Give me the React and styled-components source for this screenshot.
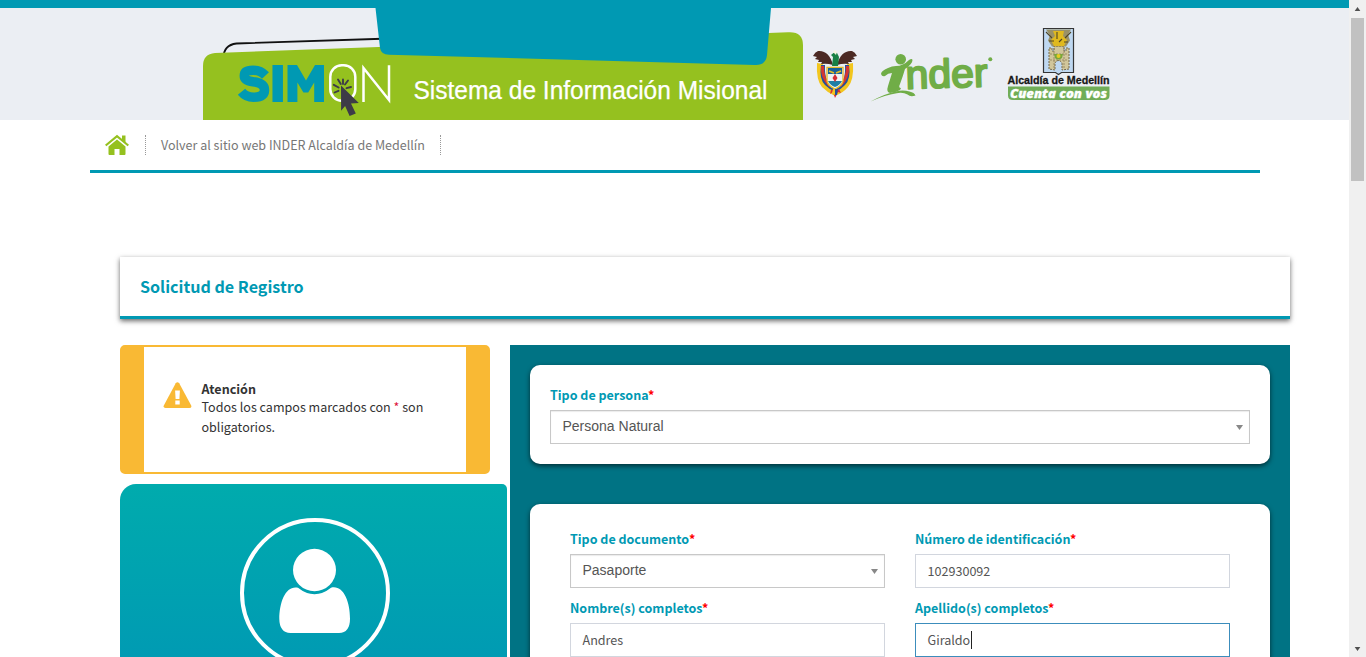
import React from "react";
import styled, { createGlobalStyle } from "styled-components";

const Global = createGlobalStyle`
  *, *::before, *::after { box-sizing: border-box; }
  body { margin: 0; overflow: hidden; background: #fff; color: #333; font: 12.5px/20px "Noto Sans CJK SC", sans-serif; }
  svg { display: block; flex: none; }
`;

const Window = styled.div`display: flex; width: 1366px; height: 657px; overflow: hidden;`;
const Page = styled.div`width: 1349px; height: 657px; overflow: hidden; flex: none;`;
const Header = styled.header`
  height: 120px; border-top: 8px solid #0099b3; background: #ebeef3;
  display: flex; padding-left: 203px;
`;
const Nav = styled.nav`
  width: 1170px; height: 53px; margin-left: 90px; padding: 0 0 0 14px;
  border-bottom: 3px solid #0099b3; display: flex; align-items: center;
`;
const NavLink = styled.a`
  height: 20px; line-height: 20px; margin-left: 16px; padding: 0 15px; color: #777;
  border-left: 1px dotted #999; border-right: 1px dotted #999; white-space: nowrap; font-size: 12.53px;
`;
const Content = styled.main`width: 1170px; margin: 84px 0 0 120px;`;
const TitleCard = styled.h1`
  margin: 0 0 26px; height: 62px; padding: 0 20px; border-bottom: 3px solid #0099b3;
  box-shadow: 0 2px 5px rgba(0,0,0,.6); color: #0099b3; font-size: 16.1px; line-height: 59px; font-weight: 700;
`;
const Columns = styled.div`display: flex; gap: 20px;`;
const Side = styled.aside`width: 370px; flex: none;`;
const Alert = styled.section`
  height: 129px; border: solid #f9b934; border-width: 2px 24px; border-radius: 5px;
  padding: 32px 18px 32px 19px; display: flex; gap: 9.5px; margin-bottom: 10px;
  svg { margin-top: 3px; }
`;
const AlertText = styled.p`margin: 0; line-height: 20px; font-size: 12.56px;`;
const AlertTitle = styled.strong`display: block; height: 18px; line-height: 19px; font-size: 12.55px;`;
const Star = styled.span`color: ${(p) => p.$tone || "#f00"};`;
const Profile = styled.section`
  width: 387px; height: 200px; padding-top: 34px; border-radius: 16px 5px 0 0;
  background: linear-gradient(#00abad, #009bb3 173px);
  svg { margin-left: 120px; }
`;
const FormPanel = styled.section`width: 780px; height: 400px; padding: 20px; background: #007384;`;
const Card = styled.div`
  border-radius: 10px; background: #fff; box-shadow: 0 2px 5px rgba(0,0,0,.6);
  padding: ${(p) => p.$pad}; height: ${(p) => p.$h}px; margin-bottom: 40px;
`;
const Grid = styled.div`display: grid; grid-template-columns: 315px 315px; gap: 0 30px;`;
const Field = styled.div`height: 69px;`;
const Label = styled.label`
  display: block; height: 25px; line-height: 19px; color: #0099b3; font-weight: 700; font-size: 12.5px;
`;
const Input = styled.div`
  height: 34px; border: 1px solid ${(p) => (p.$focus ? "#3c8dbc" : "#d2d6de")};
  padding: 0 11.5px; display: flex; align-items: center; color: #555; font-size: 12.58px;
`;
const Caret = styled.span`width: 1px; height: 18px; margin-left: 0.5px; background: #222;`;
const Select = styled.div`
  height: 34px; border: 1px solid #c8c8c8; box-shadow: inset 0 1px 1px rgba(0,0,0,.08);
  padding: 0 6px 2px 11.5px; display: flex; align-items: center; justify-content: space-between;
  color: #555; font: 14px/20px "Liberation Sans", sans-serif;
  svg { margin-top: 2px; }
`;
const Scrollbar = styled.div`
  width: 17px; height: 657px; background: #f0f0f0; display: flex; flex-direction: column;
  align-items: center; padding: 7px 0 6px;
`;
const Thumb = styled.div`width: 13px; height: 163px; margin: 7px 0 auto; background: #c1c1c1;`;

const Banner = () => (
  <svg width="600" height="112" viewBox="203 8 600 112">
    <path d="M223.500 62v-4q0-13 13-14.500L390 38.500" fill="none" stroke="#111" strokeWidth="1.800" />
    <path d="M203 120V66q0-12 12-13L788 32.300q15-1 15 13V120z" fill="#95c11f" />
    <path d="M375.500 8L380 48Q381 54.500 389 54.700L755 65q11 .5 12-10L771 8z" fill="#0099b3" />
    <g fill="none" stroke="#0099b3" strokeWidth="9.500">
      <path d="M265.500 75.500q-5-5.300-12.500-5.300-8.700 0-8.700 5.500 0 5 8.700 6 11.500 1.300 11.500 8.300 0 7.200-11 7.200-7.500 0-12-5.500" />
      <path d="M277.700 65v37" strokeWidth="10.500" />
    </g>
    <path d="M287.500 102V65h9.500l9 15.500L315 65h9v37h-9.800V82.500l-6 10h-4.800l-6-10V102z" fill="#0099b3" />
    <g fill="none" stroke="#fff" strokeWidth="2.500">
      <rect x="330.300" y="65.300" width="25" height="35.500" rx="11.500" />
      <path d="M363.500 102V68l25.500 32V65.300" />
    </g>
    <path d="M341 85.500l17.800 17.500-7.800.4 4.800 10-6.200 2.600-4.500-10-4 4.800z" fill="#3d3b47" />
    <path d="M333.800 84.800l4.800 2.700M334.500 92.500l4-1.700M338 79.500l2.800 4.500M343 79.500V84M348 80.500l-3 4M351 87l-4.500 1.200" stroke="#3d3b47" strokeWidth="1.900" strokeLinecap="round" />
    <text x="413.500" y="99" fill="#fff" stroke="#fff" strokeWidth=".25" fontFamily="Liberation Sans, sans-serif" fontSize="25" textLength="354" lengthAdjust="spacingAndGlyphs">Sistema de Información Misional</text>
  </svg>
);

const Logos = () => (
  <svg width="320" height="112" viewBox="803 8 320 112">
    <g>
      <path d="M817 63q-1 17 5 24 6 6 13 9 8-3 13-9 6-7 5-24l-6 1q4 16-4 21-4 4-8 5-4-1-8-5-8-5-4-21z" fill="#f2c61e" />
      <path d="M821 65q-2 14 4 20 4 4 9 6v-3q-10-5-9-23zM849 65q2 14-4 20-4 4-8 6v-3q9-5 8-23z" fill="#24509b" />
      <path d="M824 66q0 12 6 18l-1 3q-9-9-8-21zM846 66q0 12-6 18l1 3q9-9 8-21z" fill="#d63730" />
      <path d="M833 65Q829 50 818 51q-3 1-5 5l4 1-2 2 4 1-1 2 4 0-1 2q6-1 12 1zM837 65Q841 50 852 51q3 1 5 5l-4 1 2 2-4 1 1 2-4 0 1 2q-6-1-12 1z" fill="#4b2923" />
      <path d="M831 55q4-4 6-2l2 4-1 9h-6l1-9z" fill="#188044" />
      <path d="M833 52l2-2 2 2-1 3z" fill="#f7f3df" />
      <path d="M827 67.500h16V81q-1 5-8 8-7-3-8-8z" fill="#eef4f7" stroke="#e3b927" strokeWidth="1.300" />
      <path d="M828 68h14v6h-14z" fill="#18619a" /><path d="M828 81h14q-2 4-7 6-5-2-7-6z" fill="#207fa5" />
      <path d="M829 71l5 2M841 71l-5 2" stroke="#e5bd2b" strokeWidth="1.700" />
      <path d="M835 74l2.500 4-2.500 4-2.500-4z" fill="#d72e35" />
      <path d="M831 90l-1 4 3-2 2 6 3-6 3 1-2-4z" fill="#d72e35" /><path d="M833 89h2v6l-3-2z" fill="#f2c61e" /><path d="M835 89h3l-1 6h-2z" fill="#24509b" />
    </g>
    <g fill="#70ad47">
      <circle cx="900.700" cy="59.300" r="5.300" />
      <path d="M881 74q0-3 7-6 4-2 8-2 7 0 13-6 3-2 3.500 0 0 4-7.500 9-2 7-5 15-2 4 1 4l-1 2q-5 3-10 3-4-1-2-7l4-13q-4 0-7 3-3 1-4-2z" />
      <path d="M870.500 101.500q15-8 25-10 7-2 14 0 5 1 6 4-5 2-8-1-5-3-12-1-9 1-25 8z" />
      <circle cx="990.300" cy="59.300" r="2" />
      <text x="906" y="87.500" fontFamily="Liberation Sans, sans-serif" fontSize="40" stroke="#70ad47" strokeWidth="2" strokeLinejoin="round" textLength="82" lengthAdjust="spacingAndGlyphs" transform="rotate(-1.800 948 87)">nder</text>
    </g>
    <g>
      <path d="M1043.500 28.500h30V72.500h-12l-3 2-3-2h-12z" fill="#bfd8f1" stroke="#353535" strokeWidth="1.200" />
      <path d="M1049 69V48h3v3h2v-5h10v5h2v-3h3v21l-7 1v-7q-4-5-7 0v7z" fill="#d1c69b" stroke="#75694a" strokeWidth="1" strokeDasharray="2 1" />
      <path d="M1050 54h18M1050 60h18M1054 48v20M1064 48v20" stroke="#8f825b" strokeWidth=".8" strokeDasharray="2 1" />
      <path d="M1046 29.500h25l-3 5 2 6-4 6h-14l-4-6 2-5z" fill="#8d7939" opacity=".75" />
      <path d="M1053 31h11l-1 5 4 4-3 6h-10l-3-6 4-4z" fill="#e0b91f" />
      <path d="M1046 32l6 6M1049 41h5M1071 32l-6 6M1064 42h4M1057 32v7M1062 39l-3 3" stroke="#514624" strokeWidth="1.100" />
      <path d="M1054 54h9l-1 4q-4 3-7 0z" fill="#79a63c" /><circle cx="1058.500" cy="56" r="2" fill="#e5cb24" />
      <text x="1007.500" y="84" fill="#171717" stroke="#171717" strokeWidth=".3" fontFamily="Liberation Sans, sans-serif" fontSize="11.500" fontWeight="700" textLength="102" lengthAdjust="spacingAndGlyphs">Alcaldía de Medellín</text>
      <path d="M1008 86.500h101.500V95.500q0 4.500-5 4.500H1013q-5 0-5-4.500z" fill="#70ad57" />
      <text x="1010" y="98" fill="#fff" stroke="#fff" strokeWidth=".3" fontFamily="Open Sans, sans-serif" fontStyle="italic" fontSize="12.500" fontWeight="800" textLength="97" lengthAdjust="spacingAndGlyphs">Cuenta con vos</text>
    </g>
  </svg>
);

const Home = () => (
  <svg width="25" height="22" viewBox="0 0 25 22">
    <path d="M13 5.500L21.500 12.500V20q0 1-1 1h-5v-6h-5v6h-5q-1 0-1-1v-7.500z" fill="#95c11f" />
    <path d="M1.700 11.500L13 2.200 24.300 11.500" fill="none" stroke="#95c11f" strokeWidth="2.200" />
    <path d="M18 1.500h3.500v7.500l-3.500-3z" fill="#95c11f" />
  </svg>
);

const Warning = () => (
  <svg width="29" height="27" viewBox="0 0 29 27">
    <path d="M12.700 1.200q1.700-2 3.500 0l12 22.300q.8 2.500-2 2.500H2.500q-2.500 0-1.700-2.500z" fill="#f9b934" />
    <path d="M12.100 8.500h4.800l-.5 8.500h-3.800zM12.300 18.500h4.400v4h-4.400z" fill="#fff" />
  </svg>
);

const Avatar = () => (
  <svg width="150" height="150" viewBox="0 0 150 150">
    <circle cx="75" cy="75" r="73" fill="none" stroke="#fff" strokeWidth="4" />
    <ellipse cx="74.500" cy="52" rx="21.500" ry="21.200" fill="#fff" />
    <path d="M58 69.700q16.500 13 33 0c12-3 19 13 19 31q0 14-11 14.300H50.500Q39.500 114.700 39.300 101c0-18 7-34 18.700-31.300z" fill="#fff" />
  </svg>
);

const Arrow = ({ w = 7, h = 5, up, color = "#888" }) => (
  <svg width={w} height={h} viewBox="0 0 7 5"><path d={up ? "M0 5L3.500 0 7 5z" : "M0 0h7L3.500 5z"} fill={color} /></svg>
);

const Caption = ({ children }) => <Label>{children}<Star>*</Star></Label>;

export default function App() {
  return (
    <Window>
      <Global />
      <Page>
        <Header><Banner /><Logos /></Header>
        <Nav><Home /><NavLink>Volver al sitio web INDER Alcaldía de Medellín</NavLink></Nav>
        <Content>
          <TitleCard>Solicitud de Registro</TitleCard>
          <Columns>
            <Side>
              <Alert>
                <Warning />
                <AlertText>
                  <AlertTitle>Atención</AlertTitle>
                  Todos los campos marcados con <Star $tone="#dc143c">*</Star> son<br />obligatorios.
                </AlertText>
              </Alert>
              <Profile><Avatar /></Profile>
            </Side>
            <FormPanel>
              <Card $h={99} $pad="20px">
                <Caption>Tipo de persona</Caption>
                <Select>Persona Natural<Arrow /></Select>
              </Card>
              <Card $h={240} $pad="25px 40px">
                <Grid>
                  <Field><Caption>Tipo de documento</Caption><Select>Pasaporte<Arrow /></Select></Field>
                  <Field><Caption>Número de identificación</Caption><Input>102930092</Input></Field>
                  <Field><Caption>Nombre(s) completos</Caption><Input>Andres</Input></Field>
                  <Field><Caption>Apellido(s) completos</Caption><Input $focus>Giraldo<Caret /></Input></Field>
                </Grid>
              </Card>
            </FormPanel>
          </Columns>
        </Content>
      </Page>
      <Scrollbar>
        <Arrow up color="#505050" h={4} />
        <Thumb />
        <Arrow color="#505050" h={4} />
      </Scrollbar>
    </Window>
  );
}
